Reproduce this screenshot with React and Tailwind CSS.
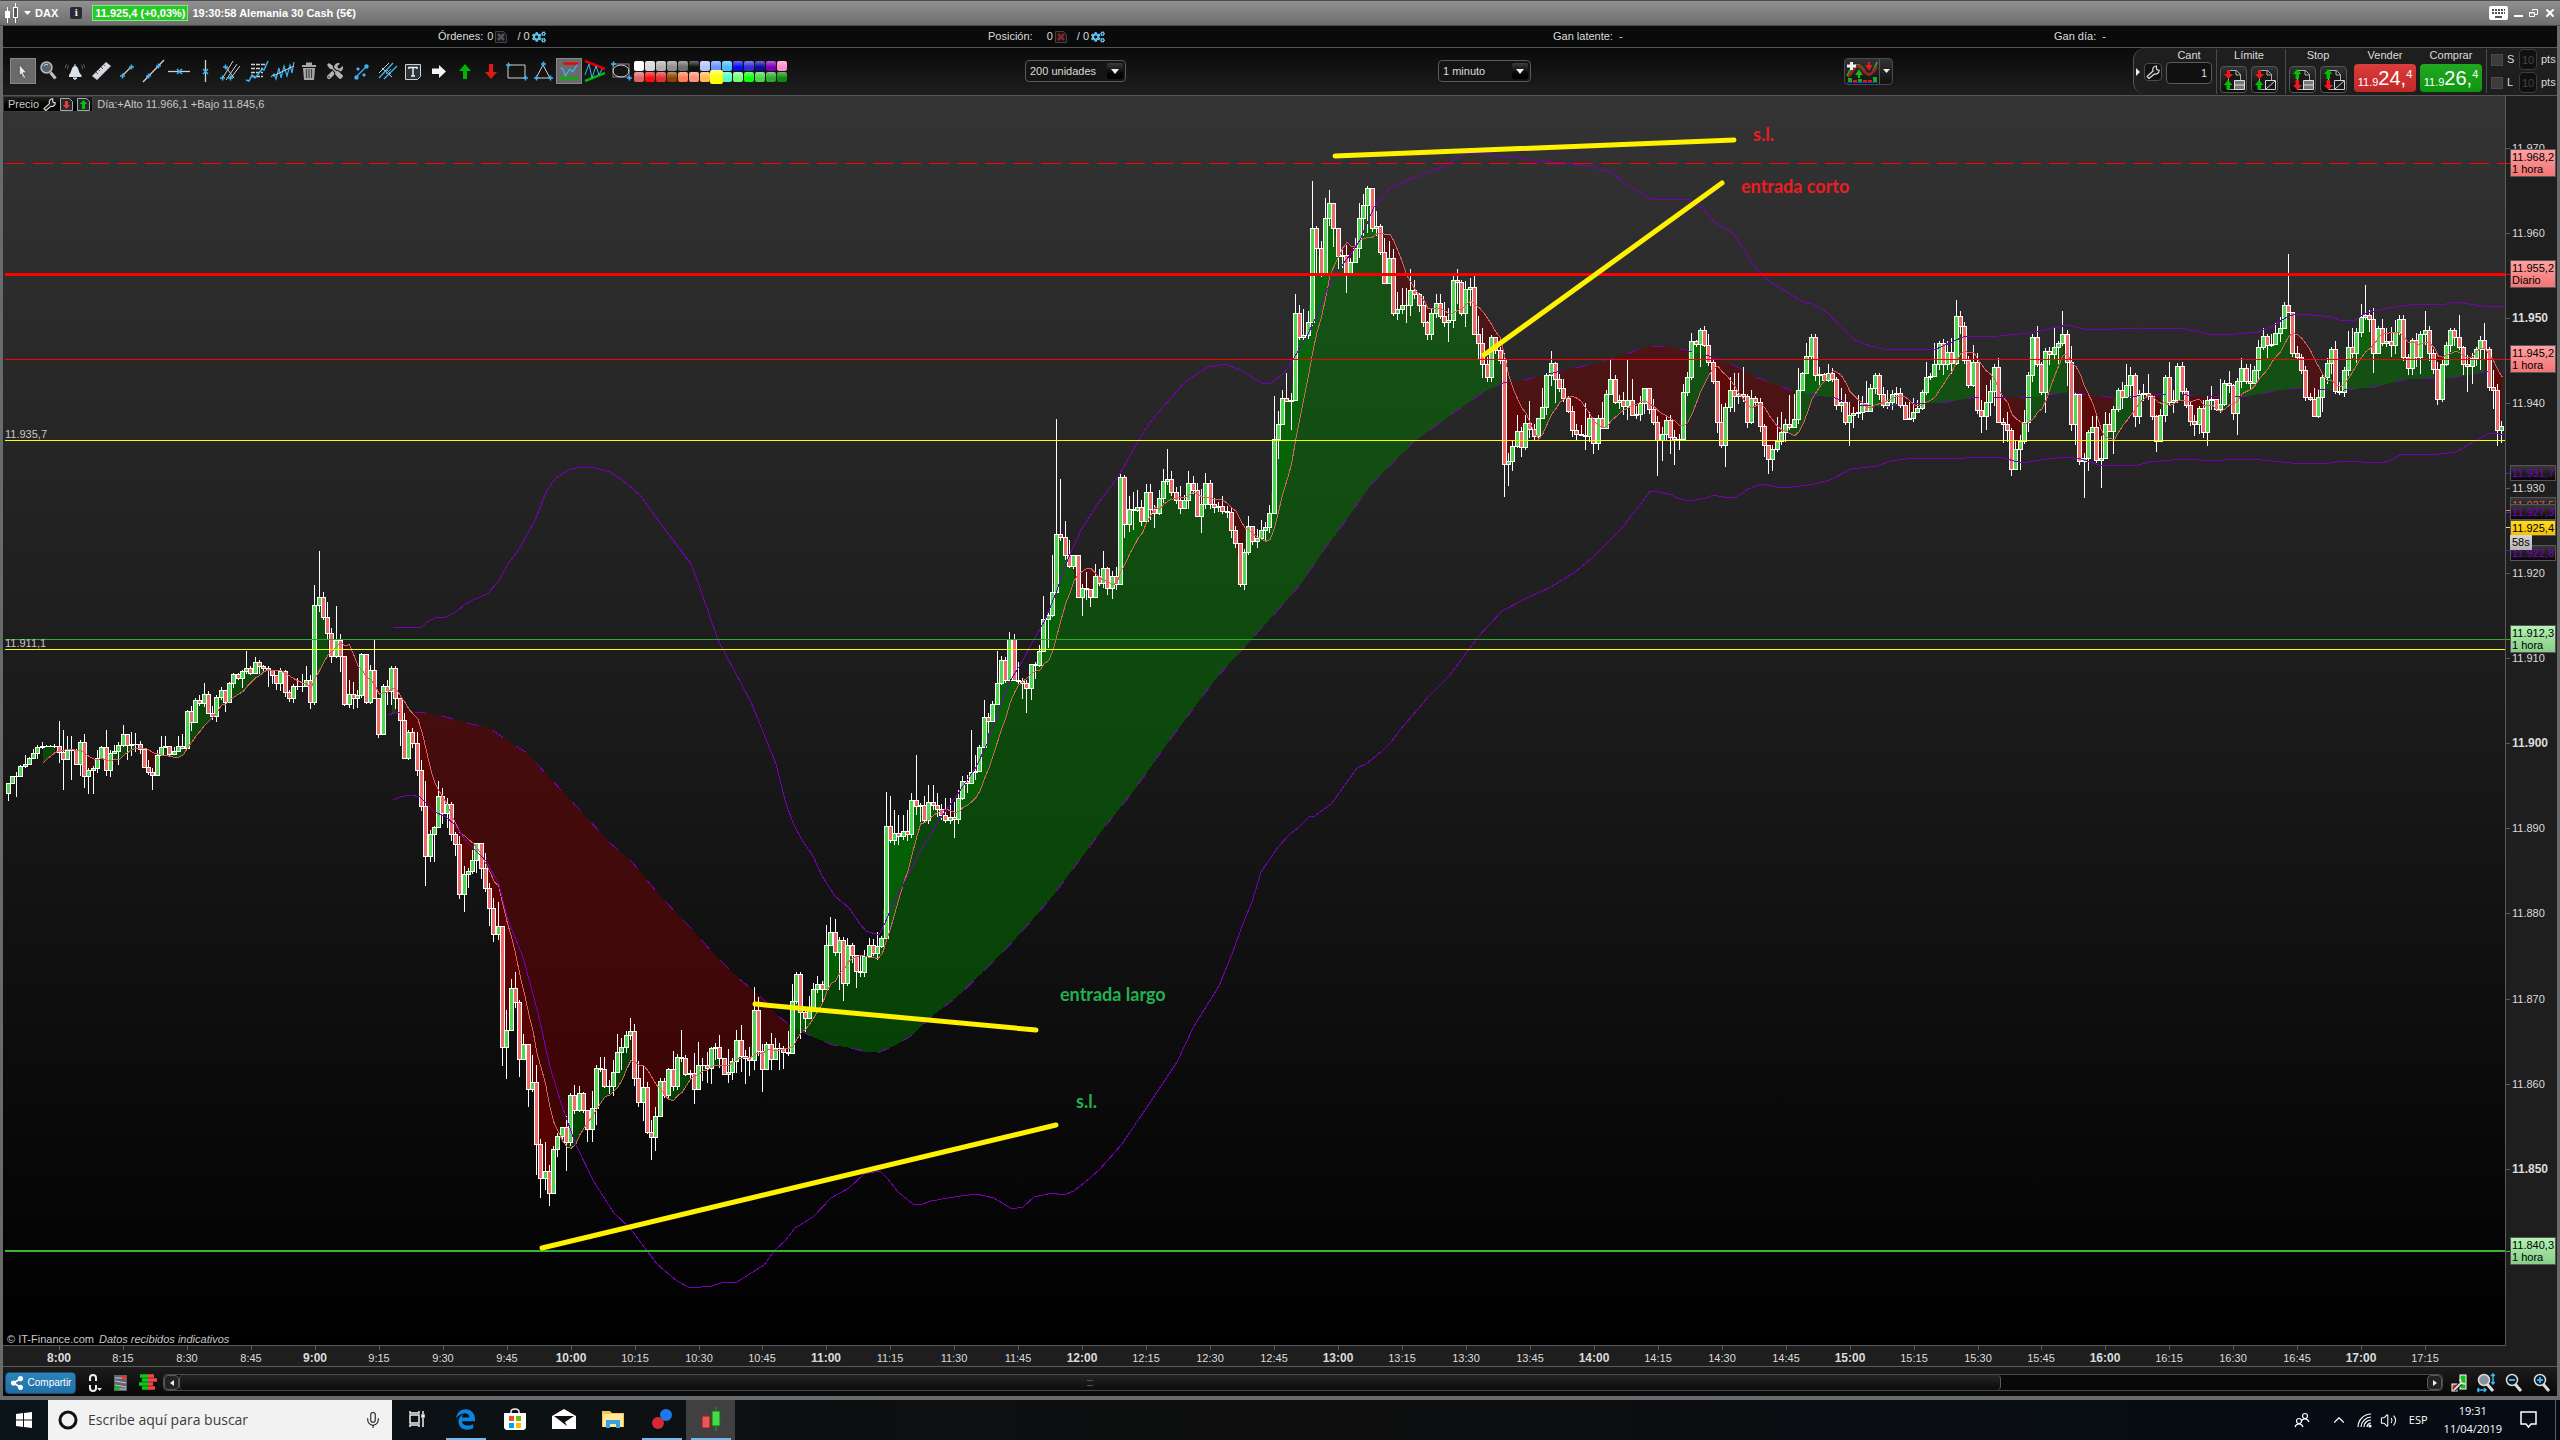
import { ChevronUp, Mic, Volume2, X } from 'lucide-react'
import { FaEdgeLegacy } from 'react-icons/fa6'
import { FaShareAlt, FaTools, FaCogs } from 'react-icons/fa'

// One candle per minute: close, high, low (plot units)
const CANDLES = `
783 783 801,776 776 782,776 772 797,766 765 773,764 755 768,758 757 763,753 749 756,747 745 759,746 742 749,746 745 747,
746 745 747,746 744 748,752 721 763,759 730 790,750 736 759,750 736 780,764 749 765,742 740 776,776 734 788,770 768 794,
768 766 794,758 750 773,747 746 756,770 730 776,753 750 777,751 745 754,745 742 765,734 725 747,745 734 760,744 732 756,
744 733 752,749 741 754,767 751 768,772 760 775,775 768 790,755 750 773,747 736 753,746 736 748,754 748 756,751 747 755,
746 736 750,748 734 749,711 710 743,722 706 731,700 698 720,703 695 706,694 683 707,713 691 714,716 706 720,697 695 722,
690 687 700,702 690 712,683 682 702,674 673 688,678 673 680,671 670 688,668 651 674,673 666 675,662 657 674,666 660 674,
668 665 672,670 666 687,675 672 684,683 676 690,671 668 691,692 670 697,698 690 702,686 684 703,686 678 690,686 674 692,
680 666 687,702 675 709,605 585 705,597 551 612,617 592 620,633 602 640,656 628 663,640 606 658,656 634 672,704 656 706,
694 680 708,698 682 709,695 690 708,654 653 698,702 656 704,670 665 704,698 640 699,734 700 738,686 684 732,691 680 705,
668 666 705,698 666 709,720 699 746,758 713 759,732 730 760,743 728 748,770 732 776,806 760 811,856 781 886,834 830 862,
827 826 862,796 781 828,813 788 824,804 798 828,834 802 841,844 832 856,894 836 899,874 866 912,871 868 888,860 850 874,
843 843 873,868 843 879,888 853 892,908 883 926,934 898 942,926 902 940,1047 927 1066,1030 1010 1079,988 979 1028,1002 972 1008,
1059 1000 1077,1044 1034 1060,1089 1047 1107,1082 1055 1092,1144 1065 1175,1178 1139 1198,1171 1142 1190,1193 1165 1206,1149 1146 1192,1136 1133 1157,
1127 1127 1142,1142 1116 1171,1095 1093 1146,1110 1085 1114,1093 1086 1112,1110 1092 1113,1129 1112 1142,1108 1091 1142,1068 1065 1125,1069 1057 1072,
1086 1057 1088,1086 1080 1094,1072 1060 1096,1052 1034 1073,1047 1038 1070,1035 1031 1053,1031 1018 1040,1078 1024 1086,1102 1061 1107,1087 1066 1121,
1132 1082 1134,1137 1120 1160,1116 1107 1151,1081 1078 1117,1095 1078 1098,1069 1068 1100,1086 1051 1091,1057 1054 1090,1058 1030 1062,1074 1055 1076,
1073 1070 1079,1089 1053 1104,1065 1042 1090,1065 1058 1081,1068 1052 1083,1048 1047 1084,1047 1043 1060,1058 1035 1068,1074 1058 1075,1072 1049 1083,
1061 1058 1080,1040 1030 1073,1056 1025 1072,1058 1050 1084,1060 1047 1076,1010 987 1070,1051 997 1056,1069 1044 1092,1044 1042 1070,1059 1033 1070,
1048 1038 1060,1048 1043 1070,1052 1046 1069,1053 1031 1056,1001 984 1053,974 972 1004,1012 972 1039,1018 1010 1032,1008 996 1019,989 983 1010,
984 976 993,989 981 1002,945 925 984,932 917 945,952 919 956,940 937 990,983 937 1001,945 938 986,955 943 963,971 957 988,
972 955 977,956 950 977,945 938 957,953 939 956,946 932 960,938 936 948,826 792 941,840 796 843,833 810 845,836 815 845,
831 815 840,834 810 841,800 793 838,806 755 815,805 803 822,820 796 822,802 785 824,805 785 810,809 793 817,815 804 820,
820 798 823,817 798 824,819 802 838,798 790 824,781 776 800,783 775 793,772 730 782,771 755 780,747 745 771,717 700 743,
721 713 733,704 701 722,683 651 702,660 656 685,680 657 683,639 632 683,680 634 681,681 662 684,683 678 699,688 680 713,
664 664 700,665 662 679,651 645 667,619 596 651,615 613 648,592 555 617,534 419 592,537 479 541,555 521 560,566 540 568,
555 555 569,597 556 598,588 584 616,589 572 600,597 590 607,576 564 597,583 569 586,568 551 588,588 567 595,576 571 599,
584 567 590,477 474 585,524 475 538,509 496 532,510 492 530,507 490 512,521 500 526,492 484 522,509 484 520,513 505 528,
498 490 515,481 469 503,479 449 485,492 471 496,500 487 504,508 486 514,500 495 508,483 471 509,490 476 494,516 483 517,
504 489 533,483 473 509,504 480 509,507 498 513,506 502 512,511 496 514,512 506 518,530 508 538,543 526 548,584 543 587,
552 549 590,526 516 555,541 526 545,538 529 548,530 520 537,527 522 541,513 505 533,439 396 512,424 411 459,398 390 424,
401 373 402,400 393 430,313 294 401,337 305 340,335 309 340,322 311 339,228 181 326,248 226 274,273 241 277,218 198 273,
203 190 226,228 204 247,256 228 271,255 250 268,273 245 293,262 258 273,248 238 262,218 203 258,205 194 236,188 186 233,
228 188 232,226 211 236,252 224 255,283 238 284,258 241 284,313 249 316,309 292 320,305 288 314,305 288 323,290 269 316,
294 280 299,305 293 312,322 296 327,334 321 340,313 308 340,303 294 318,316 294 319,322 302 327,320 308 342,280 275 328,
282 269 304,313 280 316,289 281 327,287 278 306,334 276 335,343 316 360,364 328 378,377 357 382,337 335 382,350 338 354,
360 347 364,464 353 497,461 453 486,446 440 471,431 415 448,447 427 457,423 415 450,429 401 438,436 424 440,418 418 439,
407 388 415,375 373 415,363 351 386,379 362 403,388 374 392,398 379 402,411 396 413,430 406 437,434 424 441,435 425 436,
436 403 450,418 412 442,443 419 454,418 415 450,428 402 429,394 390 425,379 358 394,402 375 404,400 395 409,406 392 415,
400 360 420,415 379 416,414 406 419,403 396 421,388 388 414,409 395 414,422 399 425,440 416 476,434 427 461,420 415 440,
437 415 454,439 430 465,439 434 450,392 384 437,377 372 396,341 333 380,344 340 347,330 328 367,345 326 347,362 334 366,
381 360 384,422 382 433,445 404 448,407 403 467,390 377 412,396 373 412,394 373 404,396 367 402,422 394 428,398 390 424,
402 396 406,426 398 432,445 424 457,459 446 474,449 445 471,441 417 452,432 412 445,424 419 442,427 395 430,419 394 427,
390 368 424,373 372 390,356 343 371,337 334 360,375 334 381,374 367 385,380 373 382,373 364 382,379 368 382,405 377 410,
402 388 412,422 394 425,415 402 446,413 407 428,412 395 418,403 396 420,411 381 412,388 384 410,375 373 394,394 373 400,
405 387 408,402 390 409,394 390 410,393 387 404,405 388 408,419 402 420,418 402 420,412 398 422,408 400 413,392 390 410,
377 362 395,376 373 380,364 343 377,343 341 370,364 339 375,352 341 370,363 338 374,316 300 365,326 311 334,360 322 364,
385 356 388,362 345 387,410 353 414,416 400 433,402 385 430,391 380 416,367 364 406,422 358 423,424 418 443,430 412 442,
469 428 476,449 441 470,441 435 470,422 410 444,375 372 432,337 334 382,364 326 367,392 362 395,351 348 413,354 347 365,
347 328 359,343 341 364,334 311 346,362 330 386,424 346 431,394 393 445,461 396 465,458 453 498,432 430 471,427 416 432,
460 415 463,458 436 488,424 412 457,431 413 432,409 406 454,390 388 412,397 382 409,385 364 398,375 367 398,416 373 427,
394 390 424,393 384 401,396 374 400,416 395 420,441 415 452,415 409 441,377 375 422,402 362 406,400 390 413,366 363 403,
391 362 394,405 388 408,421 402 426,424 415 436,408 406 434,432 400 438,400 396 446,399 386 410,409 405 411,404 379 413,
383 380 406,385 371 393,413 384 420,381 378 435,368 358 388,381 364 384,383 364 390,370 366 382,347 340 379,336 328 350,
345 334 358,344 334 347,333 323 341,328 317 342,305 302 328,312 254 313,353 313 357,357 346 360,370 354 374,397 366 401,
399 393 401,416 388 416,397 390 418,377 375 412,363 358 384,349 347 374,391 341 394,392 382 395,370 367 397,347 331 376,
353 328 358,332 328 363,317 304 337,315 285 320,319 310 332,353 308 373,328 326 352,343 319 346,341 328 347,345 327 357,
332 320 354,319 315 335,357 315 361,368 354 375,340 338 375,357 333 367,334 331 374,330 311 345,353 326 361,369 349 374,
399 362 405,364 360 402,345 342 366,330 328 352,337 328 346,347 315 350,364 346 375,366 355 392,358 353 384,349 347 366,
340 336 370,349 323 360,387 347 391,390 370 409,430 384 446,426 421 443`
  .split(',')
  .map((row) => row.trim().split(' ').map(Number))

const UPPER_BAND = '393,627 404,627 412,628 422,627 427,622 435,618 446,617 456,612 464,605 473,600 487,594 498,582 508,564 520,548 528,533 535,520 547,490 556,478 568,470 580,467 595,468 610,472 622,480 640,495 658,520 670,536 691,564 700,588 718,640 751,702 776,764 785,800 793,823 802,840 813,856 822,876 835,896 849,908 860,924 866,931 879,935 884,925 895,900 904,883 919,853 942,816 957,795 976,767 988,742 999,710 1010,681 1022,662 1033,641 1045,620 1056,593 1068,559 1081,530 1099,502 1118,477 1137,443 1146,428 1156,415 1185,382 1208,367 1225,364 1240,370 1250,376 1262,383 1271,383 1285,372 1294,358 1306,338 1316,317 1327,290 1337,272 1350,255 1360,240 1374,207 1390,188 1403,182 1428,173 1449,163 1463,154 1478,153 1495,156 1520,158 1536,161 1565,163 1594,167 1613,173 1623,182 1638,191 1650,199 1687,199 1704,209 1714,222 1733,233 1741,245 1750,260 1762,275 1770,282 1787,292 1803,302 1812,304 1828,313 1841,327 1853,339 1870,346 1884,349 1934,350 1943,346 1963,337 1999,336 2029,333 2049,329 2067,325 2088,330 2140,328 2185,329 2208,334 2235,334 2258,332 2271,327 2287,317 2296,314 2312,315 2332,317 2341,321 2355,320 2366,313 2389,308 2416,304 2441,305 2455,302 2489,307 2506,306'
const LOWER_BAND = '393,800 400,797 411,795 420,797 426,803 435,812 446,817 455,825 467,842 487,862 499,885 507,917 516,940 523,957 538,1013 550,1067 561,1103 576,1145 594,1182 614,1213 630,1228 648,1252 657,1264 677,1281 690,1288 712,1286 721,1283 737,1282 748,1275 764,1265 775,1250 786,1240 795,1228 813,1217 831,1198 849,1188 864,1174 880,1171 887,1178 898,1192 913,1204 920,1205 931,1201 954,1197 976,1194 994,1198 1012,1209 1023,1207 1034,1197 1052,1193 1063,1195 1074,1191 1090,1178 1100,1169 1122,1144 1145,1110 1165,1080 1177,1062 1194,1026 1219,986 1225,971 1232,954 1244,921 1252,902 1261,872 1278,847 1290,834 1299,827 1309,817 1315,816 1332,803 1357,768 1366,764 1382,751 1392,741 1400,730 1429,696 1450,675 1478,637 1502,611 1527,598 1551,587 1575,572 1592,558 1620,530 1640,505 1650,491 1658,492 1673,495 1677,498 1689,501 1706,498 1714,495 1727,498 1737,497 1748,489 1762,484 1777,487 1793,487 1814,484 1830,480 1851,469 1877,466 1891,461 1913,458 1936,458 1956,459 1975,457 1999,457 2022,463 2040,460 2065,457 2081,459 2099,465 2135,466 2149,462 2185,459 2212,461 2235,459 2262,460 2292,463 2330,463 2344,461 2380,463 2389,461 2402,454 2439,454 2456,452 2475,441 2489,433 2506,435'
const MIDDLE_BAND = '388,715 395,713 420,712 446,717 467,723 489,728 504,738 527,753 547,775 580,810 609,842 632,862 661,897 690,927 712,952 737,977 762,998 779,1017 795,1028 813,1037 833,1045 851,1048 866,1052 880,1052 896,1045 911,1036 931,1017 958,996 980,975 1007,948 1034,918 1056,892 1076,865 1100,833 1133,792 1164,748 1217,677 1252,639 1278,610 1301,584 1324,550 1347,519 1370,486 1400,456 1416,440 1451,415 1482,393 1503,383 1524,380 1557,372 1594,364 1623,355 1650,346 1665,346 1685,350 1706,355 1733,365 1756,377 1787,389 1808,394 1835,398 1857,405 1884,407 1909,404 1932,403 1947,402 1977,397 1999,397 2029,398 2049,395 2070,392 2095,396 2122,398 2144,395 2176,394 2208,397 2249,396 2280,390 2303,388 2326,390 2344,390 2375,387 2407,379 2452,378 2484,372 2506,371'

const MA_PERIOD = 9
const STEP = 4.263
const candleX = (i) => 8.5 + i * STEP
const priceY = (p) => 148 + (11970 - p) * 8.505

const closes = CANDLES.map((c) => c[0])
const fastMa = closes.map((_, i) =>
  i < MA_PERIOD - 1 ? null : closes.slice(i - MA_PERIOD + 1, i + 1).reduce((a, b) => a + b, 0) / MA_PERIOD
)

const middlePoints = MIDDLE_BAND.split(' ').map((p) => p.split(',').map(Number))
const slowMa = closes.map((_, i) => {
  const x = candleX(i)
  const k = middlePoints.findIndex((p) => p[0] >= x)
  if (k < 1) return null
  const [x0, y0] = middlePoints[k - 1]
  const [x1, y1] = middlePoints[k]
  return y0 + ((y1 - y0) * (x - x0)) / (x1 - x0)
})

// Cloud between the close and an average, split by side
function cloud(avg) {
  let up = ''
  let down = ''
  for (let i = 0; i < closes.length - 1; i++) {
    if (avg[i] === null || avg[i + 1] === null) continue
    const a = candleX(i).toFixed(1)
    const b = candleX(i + 1).toFixed(1)
    const quad = `M${a} ${avg[i]}L${b} ${avg[i + 1]}L${b} ${closes[i + 1]}L${a} ${closes[i]}Z`
    if (closes[i + 1] < avg[i + 1]) up += quad
    else down += quad
  }
  return { up, down }
}

const fastCloud = cloud(fastMa)
const slowCloud = cloud(slowMa)

const shapes = { wick: '', body: '', up: '', down: '' }
CANDLES.forEach(([close, high, low], i) => {
  const open = i === 0 ? 793 : closes[i - 1]
  const x = Math.round(candleX(i))
  const top = Math.min(open, close)
  const h = Math.max(open, close) - top + 1
  const hi = Math.min(high, top)
  const lo = Math.max(low, top + h)
  shapes.wick += `M${x - 1} ${hi}h1V${lo}h-1Z`
  shapes.body += `M${x - 3} ${top}h5v${h}h-5Z`
  if (h > 2) shapes[close < open ? 'up' : 'down'] += `M${x - 2} ${top + 1}h3v${h - 2}h-3Z`
})

const maPoints = fastMa.map((y, i) => (y === null ? '' : `${candleX(i).toFixed(1)},${y.toFixed(1)}`)).join(' ')

const PRICES = [11970, 11960, 11950, 11940, 11930, 11920, 11910, 11900, 11890, 11880, 11870, 11860, 11850]
const formatPrice = (p) => `${Math.floor(p / 1000)}.${String(p % 1000).padStart(3, '0')}`

const TIMES = Array.from({ length: 38 }, (_, k) => {
  const minutes = 480 + k * 15
  return `${Math.floor(minutes / 60)}:${String(minutes % 60).padStart(2, '0')}`
})

const TAGS = [
  { y: 149, h: 27, text: '11.968,2', sub: '1 hora', fill: 'url(#tagRed)', color: '#000', line: 163, tick: '#f00' },
  { y: 260, h: 27, text: '11.955,2', sub: 'Diario', fill: 'url(#tagRed)', color: '#000', line: 274, tick: '#f00' },
  { y: 345, h: 27, text: '11.945,2', sub: '1 hora', fill: 'url(#tagRed)', color: '#000', line: 359, tick: '#f00' },
  { y: 465, h: 15, text: '11.931,7', fill: 'url(#tagDark)', color: '#8000c4', line: 473, tick: '#8000c4' },
  { y: 497, h: 15, text: '11.927,5', fill: 'url(#tagDark)', color: '#d85c5c', line: 510, tick: '#f08080' },
  { y: 504, h: 15, text: '11.927,3', fill: 'url(#tagDark)', color: '#8000c4', line: 512, tick: '#8000c4' },
  { y: 545, h: 15, text: '11.922,8', fill: 'url(#tagDark)', color: '#8000c4', line: 550, tick: '#8000c4' },
  { y: 520, h: 15, text: '11.925,4', fill: 'url(#tagGold)', color: '#000', line: 527, tick: '#ddd' },
  { y: 625, h: 27, text: '11.912,3', sub: '1 hora', fill: 'url(#tagGreen)', color: '#000', line: 639, tick: '#3cb432' },
  { y: 1237, h: 27, text: '11.840,3', sub: '1 hora', fill: 'url(#tagGreen)', color: '#000', line: 1251, tick: '#3cb432' },
]

function Gradient({ id, from, to }) {
  return (
    <linearGradient id={id} x1="0" y1="0" x2="0" y2="1">
      <stop offset="0" stopColor={from} />
      <stop offset="1" stopColor={to} />
    </linearGradient>
  )
}

function Chart() {
  return (
    <svg viewBox="3 96 2554 1270" className="block h-auto w-full" fontSize="11" role="img" aria-label="DAX 1 minuto">
      <defs>
        <Gradient id="plot" from="#343434" to="#000000" />
        <Gradient id="tagRed" from="#ffa2a2" to="#f37474" />
        <Gradient id="tagGreen" from="#b4f4b4" to="#86cc86" />
        <Gradient id="tagDark" from="#3a3a3a" to="#050505" />
        <Gradient id="tagGold" from="#ffdc1e" to="#f5be0a" />
        <Gradient id="tagGrey" from="#d6d6d6" to="#b4b4b4" />
        <clipPath id="plotClip"><rect x="3" y="96" width="2502" height="1249" /></clipPath>
      </defs>
      <rect x="3" y="96" width="2554" height="1270" fill="#1e1e1e" />
      <rect x="3" y="96" width="2502" height="1249" fill="url(#plot)" />

      <g clipPath="url(#plotClip)">
        <g fillOpacity="0.5" shapeRendering="crispEdges">
          <path d={slowCloud.up} fill="#007800" />
          <path d={slowCloud.down} fill="#700000" />
          <path d={fastCloud.up} fill="#007800" />
          <path d={fastCloud.down} fill="#700000" />
        </g>
        <g shapeRendering="crispEdges">
          <path d={shapes.wick} fill="#fff" />
          <path d={shapes.body} fill="#fff" />
          <path d={shapes.up} fill="#4fd84f" />
          <path d={shapes.down} fill="#ec6c6c" />
        </g>
        <g fill="none" shapeRendering="crispEdges">
          <polyline points={maPoints} stroke="#d86060" />
          <polyline points={UPPER_BAND} stroke="#7800b4" />
          <polyline points={LOWER_BAND} stroke="#7800b4" />
          <polyline points={MIDDLE_BAND} stroke="#7800b4" strokeDasharray="12 15" />
        </g>

        <g shapeRendering="crispEdges">
          <path d="M5 163.5H2506" stroke="#f00" strokeDasharray="20 8" />
          <path d="M5 274.5H2506" stroke="#f00" strokeWidth="3" />
          <path d="M5 359.5H2506" stroke="#f00" />
          <path d="M5 440.5H2506M5 649.5H2506" stroke="#ff0" />
          <path d="M5 639.5H2506" stroke="#32a832" />
          <path d="M5 1251H2506" stroke="#3cb432" strokeWidth="2" />
        </g>
        <g fill="#c8c8c8">
          <text x="5" y="438">11.935,7</text>
          <text x="5" y="647">11.911,1</text>
        </g>

        <g stroke="#fff200" strokeWidth="5" strokeLinecap="round">
          <path d="M1335 156L1734 140" />
          <path d="M1484 355L1722 183" />
          <path d="M755 1004L1036 1030" />
          <path d="M542 1248L1056 1125" />
        </g>
        <g fontFamily="Lato, 'Open Sans', sans-serif" fontSize="18" fontWeight="700">
          <text x="1753" y="141" fill="#ed1c24">s.l.</text>
          <text x="1741" y="193" fill="#ed1c24">entrada corto</text>
          <text x="1060" y="1001" fill="#22b14c">entrada largo</text>
          <text x="1076" y="1108" fill="#22b14c">s.l.</text>
        </g>
      </g>

      <path d="M2505.5 96V1345.5H3" fill="none" stroke="#5a5a5a" />

      {/* Price scale */}
      {PRICES.map((p) => {
        const major = p % 50 === 0
        return (
          <g key={p}>
            <rect x="2506" y={Math.round(priceY(p))} width="4" height="1" fill="#5a5a5a" />
            <text x="2512" y={Math.round(priceY(p)) + 4} fill="#dcdcdc" fontSize={major ? 12 : 11} fontWeight={major ? 700 : 400}>
              {formatPrice(p)}
            </text>
          </g>
        )
      })}
      {TAGS.map((t) => (
        <g key={t.text}>
          <rect x="2506" y={t.line} width="4" height="1" fill={t.tick} />
          <rect x="2510.5" y={t.y + 0.5} width="45" height={t.h} fill={t.fill} stroke="#555" />
          <text x="2512" y={t.y + 12} fill={t.color}>{t.text}</text>
          {t.sub && <text x="2512" y={t.y + 24} fill={t.color}>{t.sub}</text>}
        </g>
      ))}
      <rect x="2510" y="535" width="22" height="15" fill="url(#tagGrey)" />
      <text x="2512" y="546" fill="#000">58s</text>

      {/* Time scale */}
      {TIMES.map((t, k) => {
        const major = t.endsWith(':00')
        const x = Math.round(59 + k * 63.95)
        return (
          <g key={t}>
            <rect x={x} y="1346" width="1" height="4" fill="#5a5a5a" />
            <text x={x} y="1362" textAnchor="middle" fill="#dcdcdc" fontSize={major ? 12 : 11} fontWeight={major ? 700 : 400}>{t}</text>
          </g>
        )
      })}
    </svg>
  )
}

const BLUE = '#3cb4f0'
const GREY = '#d0d0d0'

// Small cross handle used by the drawing tools
function Handle({ x, y }) {
  return <path d={`M${x - 2} ${y}h5M${x + 0.5} ${y - 2.5}v5`} stroke={BLUE} strokeWidth="1.5" />
}

const TOOLS = [
  { name: 'Puntero', active: true, icon: <path d="M9 6l8 9h-4l3 5-2 1-3-5-2 3z" fill="#e4e8f0" stroke="#444" strokeWidth="0.8" /> },
  { name: 'Lupa', icon: <><circle cx="10.500" cy="9.500" r="5.500" fill="#5a646c" stroke="#b8bcc0" strokeWidth="1.500" /><path d="M8 8c1-2 3-2 4-1" stroke="#c8d8e0" /><path d="M14.500 14.500l5 6" stroke="#c4c4c4" strokeWidth="3" /></> },
  { name: 'Alertas', icon: <><path d="M12.500 6h1v2c4 1 2 6 6 9v2H7v-2c3-3 2-8 5.500-9z" fill="#dce2ea" /><path d="M11 20h4l-2 1.500z" fill="#dce2ea" stroke="#dce2ea" /><path d="M7 7c-1 1-1.500 2-1.500 4M19 7c1 1 1.500 2 1.500 4M5 6c-1 1-1.500 2-1.500 4M21 6c1 1 1.500 2 1.500 4" stroke="#777" strokeWidth="0.8" /></> },
  { name: 'Regla', icon: <><path d="M18 4l5 4L9 22l-5-4z" fill="#d4d8dc" /><path d="M8 14l2 2M10.500 11.500l1.500 1.500M13 9l2 2M15.500 6.500L17 8" stroke="#555" /></> },
  { name: 'Segmento', icon: <><path d="M8 18L18 8" stroke={GREY} strokeWidth="1.2" /><Handle x={8} y={18} /><Handle x={17} y={9} /></> },
  { name: 'Línea', icon: <><path d="M3 24L24 2" stroke={GREY} strokeWidth="1.300" /><Handle x={8} y={18} /><Handle x={18} y={8} /></> },
  { name: 'Horizontal', icon: <><path d="M2 13.500h22" stroke={GREY} strokeWidth="1.300" /><path d="M11 11l5 5M16 11l-5 5" stroke={BLUE} strokeWidth="1.500" /></> },
  { name: 'Vertical', icon: <><path d="M13.500 2v22" stroke={GREY} strokeWidth="1.300" /><path d="M11 11l5 5M16 11l-5 5" stroke={BLUE} strokeWidth="1.500" /></> },
  { name: 'Canal', icon: <><path d="M4 21L15 3M8 22L19 6M12 21l10-13M7 8l9 12" stroke={GREY} /><Handle x={4} y={20} /><Handle x={7} y={9} /><Handle x={12} y={20} /></> },
  { name: 'Regresión', icon: <><path d="M7 6.500h14M7 10.500h12M7 14.500h12M7 18.500h12" stroke={GREY} strokeWidth="1.500" strokeDasharray="4 1" /><path d="M2 22l3 1 3-6 3 3 4-5 3-4 2 1 4-9" stroke={BLUE} fill="none" strokeWidth="1.500" /></> },
  { name: 'Ondas', icon: <><path d="M1 19l3-3 2 5 3-11 2 10 3-12 3 10 3-11 2 8 2-11" stroke={BLUE} fill="none" strokeWidth="1.2" /><path d="M3 18L24 8" stroke={GREY} /></> },
  { name: 'Borrar', icon: <><path d="M6 7h14v2H6zM10 4.500h6V7h-6z" fill="#a8a8a8" /><path d="M7 10h12l-1 12H8z" fill="#a8a8a8" /><path d="M10.500 11v9M13 11v9M15.500 11v9" stroke="#444" strokeWidth="1.2" /></> },
  { name: 'Herramientas', icon: <g transform="translate(5 5)"><FaTools size={16} color="#b0b4b8" /></g> },
  { name: 'Extender', icon: <><path d="M9 18l8-8" stroke={BLUE} strokeWidth="1.2" /><path d="M7 18h3v3H7zM17 7h3v3h-3zM9 10h2v2H9zM15 16h2v2h-2z" fill={BLUE} stroke={BLUE} /></> },
  { name: 'Paralelas', icon: <><path d="M5 20L19 5M10 21L23 8" stroke={BLUE} strokeWidth="1.3" /><path d="M5 15L15 5M8 10l10 9" stroke={GREY} /><path d="M12 11l5 5M17 11l-5 5" stroke={BLUE} /></> },
  { name: 'Texto', icon: <><path d="M5.500 6.500h15v12l-3 3h-12z" fill="#2c343c" stroke={GREY} /><path d="M9 11V9.500h8V11M13 9.500V18M11 18h4" stroke="#f0f0f0" strokeWidth="1.500" /></> },
  { name: 'Flecha', icon: <path d="M6 10.500h7V7l7 6.500-7 6.500v-4H6z" fill="#f4f4f4" /> },
  { name: 'Flecha arriba', icon: <path d="M13 6l6 7h-4v8h-4v-8H7z" fill="#00b400" /> },
  { name: 'Flecha abajo', icon: <path d="M13 21l6-7h-4V6h-4v8H7z" fill="#e01818" /> },
  { name: 'Rectángulo', icon: <><path d="M4 7h17v13H4z" stroke={GREY} fill="none" /><Handle x={4} y={7} /><Handle x={21} y={20} /></> },
  { name: 'Triángulo', icon: <><path d="M13 7L6 20h14z" stroke={GREY} fill="none" /><Handle x={13} y={6} /><Handle x={6} y={20} /><Handle x={20} y={20} /></> },
  { name: 'Soportes', active: true, icon: <><path d="M7 5h16" stroke="#f00000" strokeWidth="2.500" /><path d="M3 21h20" stroke="#00b400" strokeWidth="2.500" /><path d="M3 10h3l3 8 5-7 3 3 5-8" stroke={BLUE} fill="none" strokeWidth="1.300" /></> },
  { name: 'Cuña', icon: <><path d="M3 3l20 8" stroke="#e00000" strokeWidth="2.500" /><path d="M3 23l20-8" stroke="#00b400" strokeWidth="2.500" /><path d="M3 17l4-11 3 14 4-12 3 9 3-6" stroke={BLUE} fill="none" /></> },
  { name: 'Elipse', icon: <><rect x="5" y="6" width="16" height="13" stroke="#888" fill="none" /><ellipse cx="13" cy="13" rx="8" ry="6" stroke={GREY} fill="none" /><Handle x={5} y={6} /><Handle x={21} y={20} /></> },
]

const SWATCHES = [
  ['#ffffff', '#d8d8d8', '#b0b0b0', '#8f8f8f', '#6e6e6e', '#101010', '#b4c4ff', '#6d94ff', '#46c0ff', '#0a0af0', '#2f2fd8', '#0c0ca0', '#7a00b4', '#ff8ccc'],
  ['#dc6464', '#ff0a0a', '#e62e2e', '#8b4300', '#ff7f50', '#ff8f78', '#ffbb50', '#ffff00', '#50ffc8', '#78ff78', '#0aff0a', '#46d746', '#2fa82f', '#0a8c0a'],
]

function Palette() {
  return (
    <div className="flex flex-col gap-px">
      {SWATCHES.map((row, r) => (
        <div key={r} className="flex">
          {row.map((color) => (
            <button
              key={color}
              aria-label={color}
              className={
                color === '#ffff00'
                  ? 'relative z-10 -mx-px -my-0.5 h-3.5 w-[13px] rounded-xs bg-linear-to-b from-white/60 to-transparent to-50%'
                  : 'mr-px h-2.5 w-2.5 rounded-xs bg-linear-to-b from-white/40 to-transparent to-60%'
              }
              style={{ backgroundColor: color }}
            />
          ))}
        </div>
      ))}
    </div>
  )
}

function PlotSelect({ label, value, className }) {
  return (
    <div className={`relative justify-self-start ${className}`}>
      <select
        aria-label={label}
        defaultValue={value}
        className="h-[22px] w-full appearance-none rounded border border-[#5a5a5a] bg-[#141414] pl-1 text-[11px] text-[#dcdcdc]"
      >
        <option>{value}</option>
      </select>
      <span className="pointer-events-none absolute top-[3px] right-[3px] flex h-4 w-4 items-center justify-center rounded-xs bg-linear-to-b from-[#3c3c3c] to-black">
        <svg width="8" height="5"><path d="M0 0h8L4 5z" fill="#eee" /></svg>
      </span>
    </div>
  )
}

function Counter({ label, color, gap }) {
  return (
    <div className="flex items-center">
      <span>{label}</span>
      <span className={gap}>0</span>
      <svg width="12" height="12" className="ml-0.5">
        <path d="M.5.5h8l3 3v8H.5z" fill="#151515" stroke="#444" />
        <path d="M3 3l6 6M9 3l-6 6" stroke={color} strokeWidth="2.500" />
      </svg>
      <span className="mr-0.5 ml-2.5">/ 0</span>
      <FaCogs size={14} color="#60c0ec" />
    </div>
  )
}

// Outlined spanner
function Wrench({ size }) {
  return (
    <svg width={size} height={size} viewBox="0 0 14 14">
      <path d="M1 11.500L7 6c-1-3 1-5 3.500-5v3l1 1H13c.5 3-2 4.500-4.500 4L3 13.500z" fill="#1a1a1a" stroke="#dcdcdc" strokeWidth="1.200" />
    </svg>
  )
}

function OrderIcon({ first, second, cut }) {
  return (
    <svg width="24" height="24" viewBox="0 0 24 24">
      <path d="M6.500 2.500h8l4 4v15h-12z" fill="#181818" stroke="#b0b0b0" />
      <path d="M14 2v5h5" fill="none" stroke="#b0b0b0" />
      {first === 'down'
        ? <path d="M5 2h3v4h3l-4.500 5L2 6h3z" fill="#f01818" />
        : <path d="M6 1l4.500 5H8v5H4.500V6H2z" fill="#00c000" />}
      {second === 'up'
        ? <path d="M6 12l4.500 5H8v5H4.500v-5H2z" fill="#00c000" />
        : <path d="M4.500 12H8v5h3l-4.500 5L2 17h2.500z" fill="#f01818" />}
      {cut
        ? <path d="M12.500 12.500h10v9h-10zM13 21l9-8" fill="#181818" stroke="#d0d0d0" />
        : <path d="M12.500 12.500h10v9h-10zM13 17h9" fill="#777" stroke="#e0e0e0" />}
    </svg>
  )
}

function OrderGroup({ label, children }) {
  return (
    <div className="flex h-full flex-col items-center gap-1 border-l border-[#4a4a4a] px-[3px]">
      <span className="leading-[13px]">{label}</span>
      <div className="flex gap-1">{children}</div>
    </div>
  )
}

const orderButton = 'flex h-[27px] w-[27px] items-center justify-center rounded border border-[#555] bg-linear-to-b from-[#333] to-[#0a0a0a]'

function PriceButton({ label, head, big, tail, className }) {
  return (
    <div className="flex flex-col items-center gap-0.5">
      <span className="leading-[13px]">{label}</span>
      <button aria-label={label} className={`flex h-7 w-[62px] items-center justify-center rounded text-white ${className}`}>
        <span className="pt-2 text-[11px]">{head}</span>
        <span className="text-xl leading-6">{big},</span>
        <span className="pb-2 text-[11px]">{tail}</span>
      </button>
    </div>
  )
}

function StopRow({ label }) {
  return (
    <div className="flex items-center gap-1">
      <input type="checkbox" aria-label={`Activar ${label}`} className="h-3 w-3 appearance-none border border-[#4a4a4a] bg-[#3c3c3c]" />
      <label htmlFor={`pts-${label}`} className="w-2">{label}</label>
      <input id={`pts-${label}`} defaultValue="10" className="h-[21px] w-[18px] rounded border border-[#3c3c3c] bg-[#101010] text-center text-[11px] text-[#444]" />
      <span>pts</span>
    </div>
  )
}

function TradePanel() {
  return (
    <div className="flex h-full items-start gap-1 rounded-l-xl border-l border-[#555] bg-[#1e1e1e] pt-px pl-0.5 text-[#dcdcdc]">
      <button aria-label="Plegar" className="self-center"><svg width="4" height="8"><path d="M0 0l4 4-4 4z" fill="#eee" /></svg></button>
      <button aria-label="Ajustes" className="flex h-[18px] w-[18px] items-center justify-center self-center rounded border border-[#4a4a4a] bg-[#101010]">
        <Wrench size={14} />
      </button>
      <div className="flex w-[46px] flex-col items-center">
        <label htmlFor="cant" className="leading-[13px]">Cant</label>
        <input id="cant" defaultValue="1" className="h-[22px] w-full rounded border border-[#5a5a5a] bg-[#101010] pr-1 text-right text-[11px]" />
      </div>
      <OrderGroup label="Límite">
        <button aria-label="Límite" className={orderButton}><OrderIcon first="down" second="up" /></button>
        <button aria-label="Límite cancelar" className={orderButton}><OrderIcon first="down" second="up" cut /></button>
      </OrderGroup>
      <OrderGroup label="Stop">
        <button aria-label="Stop" className={orderButton}><OrderIcon first="up" second="down" /></button>
        <button aria-label="Stop cancelar" className={orderButton}><OrderIcon first="up" second="down" cut /></button>
      </OrderGroup>
      <PriceButton label="Vender" head="11.9" big="24" tail="4" className="bg-linear-to-b from-[#dc3c3c] to-[#c02828]" />
      <PriceButton label="Comprar" head="11.9" big="26" tail="4" className="bg-linear-to-b from-[#20a820] to-[#0c960c]" />
      <div className="flex flex-col gap-0.5 border-l border-[#4a4a4a] pl-1">
        <StopRow label="S" />
        <StopRow label="L" />
      </div>
    </div>
  )
}

function TitleBar() {
  return (
    <header className="flex h-[26px] items-center border-y border-[#4a4a4a] bg-linear-to-b from-[#909090] to-[#6e6e6e] px-1 text-[11px] font-bold text-white">
      <svg width="16" height="22" viewBox="0 0 16 22">
        <path d="M3.500 5v16M11.500 1v20" stroke="#fff" />
        <rect x="1" y="9" width="5" height="7" fill="#fff" />
        <rect x="9.500" y="5.500" width="4" height="10" fill="#555" stroke="#fff" />
      </svg>
      <svg width="7" height="4" className="mx-1"><path d="M0 0h7L3.500 4z" fill="#fff" /></svg>
      <span>DAX</span>
      <button aria-label="Información" className="ml-3 flex h-3 w-3 items-center justify-center rounded-xs bg-[#2a2a34] font-serif text-[10px]">i</button>
      <span className="ml-2.5 border border-[#7cf07c] bg-[#28c828] px-0.5 leading-[14px]">11.925,4 (+0,03%)</span>
      <span className="ml-1">19:30:58 Alemania 30 Cash (5€)</span>
      <div className="ml-auto flex items-center gap-1.5">
        <button aria-label="Teclado">
          <svg width="19" height="14" viewBox="0 0 19 14">
            <rect width="19" height="14" rx="2" fill="#fff" />
            <path d="M3 4h13M3 7h13" stroke="#555" strokeWidth="2" strokeDasharray="2 1" />
            <path d="M6 11h7" stroke="#555" strokeWidth="2" />
          </svg>
        </button>
        <button aria-label="Minimizar"><svg width="9" height="10"><path d="M0 8h9" stroke="#fff" strokeWidth="2" /></svg></button>
        <button aria-label="Restaurar">
          <svg width="9" height="10" fill="none" stroke="#fff"><path d="M3.500 3V1.500h5v5H6" /><path d="M.5 4.500h5v4h-5zM0 5h6" /></svg>
        </button>
        <button aria-label="Cerrar"><X size={12} strokeWidth={4} /></button>
      </div>
    </header>
  )
}

function PriceHeader() {
  return (
    <div className="absolute top-0 left-0 flex h-4 items-center text-[11px] text-[#c8c8c8]">
      <div className="flex h-full items-center gap-1 border border-[#3c3c3c] bg-linear-to-b from-[#222] to-black pr-0.5 pl-1">
        <span>Precio</span>
        <Wrench size={13} />
        <svg width="13" height="13"><path d="M.5.5h9l3 3v9H.5z" fill="#222a30" stroke="#aaa" /><path d="M5 3h3v4h2l-3.500 4L3 7h2z" fill="#f03838" /></svg>
        <svg width="13" height="13"><path d="M.5.5h9l3 3v9H.5z" fill="#222a30" stroke="#aaa" /><path d="M6.500 2L10 6H8v5H5V6H3z" fill="#00c800" /></svg>
      </div>
      <span className="ml-1">Día:+Alto 11.966,1 +Bajo 11.845,6</span>
    </div>
  )
}

function ZoomIcon({ mode }) {
  return (
    <svg width="18" height="20" viewBox="0 0 18 20">
      <path d="M10 11l6 7" stroke="#ddd" strokeWidth="3" />
      <circle cx="7" cy="7" r="5.500" fill={mode ? '#0a1a24' : '#8890a0'} stroke="#ddd" strokeWidth="1.500" />
      {mode && <path d="M4 7h6" stroke={BLUE} strokeWidth="2" />}
      {mode === 'in' && <path d="M7 4v6" stroke={BLUE} strokeWidth="2" />}
      {!mode && <path d="M16 1v10M14 3l2-2 2 2M14 9l2 2 2-2M0 17h9M2 15l-2 2 2 2M7 15l2 2-2 2" stroke={BLUE} fill="none" strokeWidth="1.500" />}
    </svg>
  )
}

function BottomBar() {
  const arrow = 'flex h-full w-[15px] items-center justify-center rounded border border-[#5a5a5a] bg-[#222]'
  return (
    <div className="flex h-[30px] items-center border-t border-[#5a5a5a] bg-linear-to-b from-[#1c1c1c] to-[#080808] pt-0.5 pr-1.5 pl-0.5">
      <button className="flex h-[22px] w-[71px] items-center justify-center gap-1 rounded border border-[#1a4c74] bg-linear-to-b from-[#2c84b8] to-[#2070a8] text-[10px] text-white">
        <FaShareAlt size={14} />Compartir
      </button>
      <button aria-label="Vincular" className="ml-3">
        <svg width="14" height="18" viewBox="0 0 14 18" fill="none" stroke="#eee" strokeWidth="2">
          <path d="M2 7V4a3 3 0 016 0v3M2 11v3a3 3 0 006 0v-3" /><path d="M9 14h5l-2.500 3z" fill="#eee" stroke="none" />
        </svg>
      </button>
      <button aria-label="Lista" className="ml-3">
        <svg width="13" height="16"><rect width="13" height="16" fill="#5c6470" /><path d="M1 3h11M1 6l11 2M1 10l11 2M1 14h11" stroke="#c8ccd0" /><path d="M7 1h6l-3 5z" fill="#f03030" /><path d="M0 15l3-5 3 5z" fill="#10c010" /></svg>
      </button>
      <button aria-label="Profundidad" className="ml-3">
        <svg width="18" height="17"><path d="M1 2h8M3 6h6M0 10h9M3 14h6" stroke="#10c810" strokeWidth="3.500" /><path d="M9 2h6M9 6h9M9 10h5M9 14h7" stroke="#f04848" strokeWidth="3.500" /></svg>
      </button>
      <div className="ml-1.5 flex h-[17px] flex-1 rounded border border-[#4a4a4a] bg-[#080808]">
        <button aria-label="Atrás" className={arrow}><svg width="4" height="6"><path d="M4 0v6L0 3z" fill="#eee" /></svg></button>
        <div className="flex w-4/5 items-center justify-center rounded border-x border-[#5a5a5a] bg-linear-to-b from-[#242424] to-[#0c0c0c]">
          <span className="h-1.5 w-1.5 border-y border-[#555]" />
        </div>
        <button aria-label="Adelante" className={`ml-auto ${arrow}`}><svg width="4" height="6"><path d="M0 0v6l4-3z" fill="#eee" /></svg></button>
      </div>
      <div className="ml-2 flex items-center gap-2.5">
        <button aria-label="Configurar">
          <svg width="16" height="20"><rect x="9" y="2" width="6" height="14" fill="#10c010" stroke="#fff" /><rect x="1" y="11" width="5" height="7" fill="#e03030" stroke="#fff" /><path d="M3 17l8-8" stroke="#222" strokeWidth="4" /><path d="M3 17l8-8M9 6l1 4 4 1" stroke="#ddd" strokeWidth="2" fill="none" /></svg>
        </button>
        <button aria-label="Zoom auto"><ZoomIcon /></button>
        <button aria-label="Alejar"><ZoomIcon mode="out" /></button>
        <button aria-label="Acercar"><ZoomIcon mode="in" /></button>
      </div>
    </div>
  )
}

const TASKS = [
  { name: 'Vista de tareas', icon: <svg width="18" height="18" fill="none" stroke="#eee" strokeWidth="1.500"><path d="M2 5h9v8H2zM2 1v2h9V1M2 17v-2h9v2M15 1v3M15 8v9" /><rect x="14" y="5" width="2" height="2" fill="#eee" /></svg> },
  { name: 'Edge', open: true, icon: <FaEdgeLegacy size={21} color="#0a84e0" /> },
  { name: 'Store', icon: <svg width="24" height="24"><path d="M8 8V5c0-4 8-4 8 0v3" stroke="#eee" strokeWidth="1.500" fill="none" /><path d="M1 6h22v15l-2 2H3l-2-2z" fill="#fff" /><path d="M6 9h5v5H6z" fill="#f04e23" /><path d="M13 9h5v5h-5z" fill="#7cb900" /><path d="M6 16h5v5H6z" fill="#00a3ee" /><path d="M13 16h5v5h-5z" fill="#ffb900" /></svg> },
  { name: 'Correo', icon: <svg width="24" height="20"><path d="M0 7l12-7 12 7v13H0z" fill="#fff" /><path d="M2 7h20l-9 6 2 4-4-3z" fill="#111" /></svg> },
  { name: 'Explorador', icon: <svg width="22" height="19"><path d="M0 1h8l2 2h12v14H0z" fill="#f0c850" /><path d="M1 4h20v13H1z" fill="#ffe699" /><path d="M4 18v-8h14v8h-4v-4H8v4z" fill="#3aa0e0" /></svg> },
  { name: 'IG', open: true, icon: <svg width="22" height="24"><circle cx="15" cy="8" r="6" fill="#1e78f0" /><circle cx="7" cy="16" r="6" fill="#d42a34" /></svg> },
  { name: 'ProRealTime', open: true, active: true, icon: <svg width="20" height="26"><path d="M5 7v16" stroke="#a03030" /><path d="M15 1v24" stroke="#20a020" /><rect x="1" y="10" width="8" height="12" fill="#e85858" stroke="#802020" /><rect x="11" y="5" width="8" height="15" fill="#48d848" stroke="#107010" /></svg> },
]

function Taskbar() {
  return (
    <footer className="flex h-10 items-center bg-linear-to-r from-[#0a1318] via-[#0e0e0e] to-[#050c15] font-['Open_Sans',sans-serif] text-white">
      <button aria-label="Inicio" className="flex h-full w-12 items-center justify-center">
        <svg width="16" height="16" fill="#fff"><path d="M0 2l7-1v6.500H0zM8 1l8-1v7.500H8zM0 8.500h7V15l-7-1zM8 8.500h8V16l-8-1z" /></svg>
      </button>
      <label className="flex h-full w-[344px] items-center bg-[#f2f2f2] px-2.5">
        <svg width="20" height="20" className="shrink-0"><circle cx="10" cy="10" r="8" fill="none" stroke="#111" strokeWidth="3" /></svg>
        <input aria-label="Buscar" placeholder="Escribe aquí para buscar" className="ml-2.5 min-w-0 flex-1 text-sm placeholder:text-[#3c3c3c]" />
        <Mic size={18} strokeWidth={1.5} color="#222" />
      </label>
      <div className="flex h-full">
        {TASKS.map((t) => (
          <button
            key={t.name}
            aria-label={t.name}
            className={`flex h-full w-[49px] items-center justify-center ${t.active ? 'bg-[#404040]' : ''}`}
          >
            <span className={`flex h-full w-10 items-center justify-center border-b-2 ${t.open ? 'border-[#76b9ed]' : 'border-transparent'}`}>{t.icon}</span>
          </button>
        ))}
      </div>
      <div className="ml-auto flex h-full items-center">
        <svg width="16" height="16" fill="none" stroke="#fff" strokeWidth="1.200">
          <circle cx="11" cy="4" r="2.500" /><path d="M7.500 9c1-3 6-3 7.500 1" />
          <circle cx="5" cy="9" r="2.500" /><path d="M1 15c1-4 7-4 8 0" />
        </svg>
        <ChevronUp size={18} strokeWidth={1.5} className="ml-5" />
        <svg width="16" height="16" className="ml-2" fill="none" stroke="#fff" strokeWidth="1.200">
          <path d="M2 15C2 8 8 2 15 2M5 15c0-5 5-10 10-10M8 15c0-4 3-7 7-7M11 15c0-2 2-4 4-4" /><circle cx="14" cy="14" r="1" fill="#fff" />
        </svg>
        <Volume2 size={17} strokeWidth={1.5} className="ml-2" />
        <span className="ml-3 text-[11px]">ESP</span>
        <div className="ml-4 text-center text-[11px] leading-[18px]">
          <p>19:31</p>
          <p>11/04/2019</p>
        </div>
        <svg width="17" height="18" className="mx-4.5" fill="none" stroke="#fff" strokeWidth="1.500"><path d="M1 1h15v12h-5l-2.500 3L6 13H1z" /></svg>
        <span className="mr-1 h-full border-l border-[#5a6068]" />
      </div>
    </footer>
  )
}

export default function App() {
  return (
    <div className="w-full bg-black font-['Liberation_Sans',Arial,sans-serif] text-[11px]">
      <TitleBar />
      <main className="border-x-3 border-b-4 border-[#6a6a6a] text-[#dcdcdc]">
        <div className="grid h-[22px] grid-cols-[550fr_565fr_501fr_503fr] items-center border-b border-[#555] bg-[#0a0a0a] pl-[435px]">
          <Counter label="Órdenes:" color="#4a545c" gap="ml-1" />
          <Counter label="Posición:" color="#802828" gap="ml-3.5" />
          <span>Gan latente: &nbsp;-</span>
          <span>Gan día: &nbsp;-</span>
        </div>

        <div className="grid h-12 grid-cols-[1022fr_413fr_406fr_289fr_424px] items-center border-b border-[#555] bg-linear-to-b from-[#0a0a0a] to-[#1e1e1e] pb-px">
          <div className="flex items-center pl-[7px]">
            {TOOLS.map((tool) => (
              <button key={tool.name} aria-label={tool.name} className={`h-[26px] w-[26px] ${tool.active ? 'border border-[#888] bg-[#6a6a6a]' : ''}`}>
                <svg viewBox="0 0 26 26" className="block h-full w-full" fill="none">{tool.icon}</svg>
              </button>
            ))}
            <Palette />
          </div>
          <PlotSelect label="Unidades" value="200 unidades" className="w-[101px]" />
          <PlotSelect label="Intervalo" value="1 minuto" className="w-[93px]" />
          <button aria-label="Añadir indicador" className="flex h-[27px] w-[49px] items-center rounded border border-[#4a4a4a] bg-linear-to-b from-[#333] to-[#111]">
            <svg width="34" height="25" fill="none">
              <path d="M2 17C8 4 14 3 19 11s8 6 13-8" stroke="#30a030" strokeWidth="2" />
              <path d="M3 18c5-4 7-14 12-10s8 14 17 0" stroke="#a02020" strokeWidth="2.500" />
              <path d="M2 7h9M6.500 3v8" stroke="#eee" strokeWidth="3" />
              <path d="M24 3v5M22 7l2 3 2-3z" stroke="#e02020" strokeWidth="2" fill="#e02020" />
              <path d="M14 19v-5M12 15l2-3 2 3z" stroke="#10c010" strokeWidth="2" fill="#10c010" />
              <path d="M3 19h4v4H3zM13 20h4v3h-4zM28 18h4v5h-4z" fill="#10b010" /><path d="M8 21h4v2H8zM18 21h4v2h-4zM23 21h4v2h-4z" fill="#d02020" />
              <path d="M2 23.500h31" stroke="#2030d0" />
            </svg>
            <span className="flex h-full flex-1 items-center justify-center border-l border-[#555]"><svg width="7" height="4"><path d="M0 0h7L3.500 4z" fill="#eee" /></svg></span>
          </button>
          <TradePanel />
        </div>

        <section className="relative">
          <Chart />
          <PriceHeader />
          <p className="absolute bottom-[19px] left-1 leading-4 text-[#c8c8c8]">© IT-Finance.com <em className="ml-0.5">Datos recibidos indicativos</em></p>
        </section>
        <BottomBar />
      </main>
      <Taskbar />
    </div>
  )
}
